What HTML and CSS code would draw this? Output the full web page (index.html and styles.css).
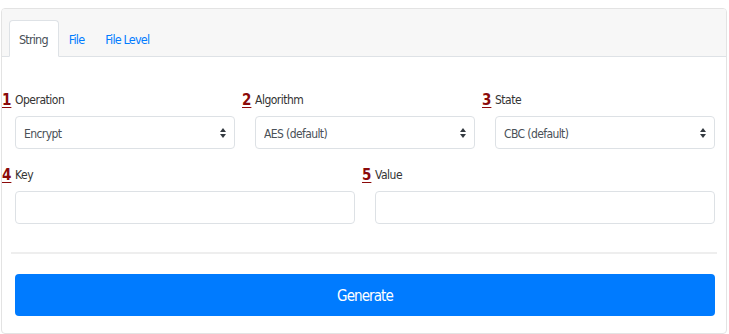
FILE: index.html
```html
<!DOCTYPE html>
<html lang="en">
<head>
    <meta charset="UTF-8">
    <meta name="viewport" content="width=device-width, initial-scale=1.0">
    <title>Encrypt / Decrypt</title>
    <link rel="stylesheet" href="styles.css">
</head>
<body>
    <div class="card">
        <div class="card-header">
            <ul class="tabs">
                <li class="tab active">String</li>
                <li class="tab">File</li>
                <li class="tab">File Level</li>
            </ul>
        </div>

        <div class="card-body">
            <div class="row three">
                <div class="group">
                    <span class="num">1</span>
                    <label for="operation">Operation</label>
                    <select id="operation">
                        <option>Encrypt</option>
                        <option>Decrypt</option>
                    </select>
                </div>
                <div class="group">
                    <span class="num">2</span>
                    <label for="algorithm">Algorithm</label>
                    <select id="algorithm">
                        <option>AES (default)</option>
                    </select>
                </div>
                <div class="group">
                    <span class="num">3</span>
                    <label for="state">State</label>
                    <select id="state">
                        <option>CBC (default)</option>
                    </select>
                </div>
            </div>

            <div class="row two">
                <div class="group">
                    <span class="num">4</span>
                    <label for="key">Key</label>
                    <input type="text" id="key">
                </div>
                <div class="group">
                    <span class="num">5</span>
                    <label for="value">Value</label>
                    <input type="text" id="value">
                </div>
            </div>

            <hr>

            <button type="button">Generate</button>
        </div>
    </div>
</body>
</html>
```

FILE: styles.css
```css
* {
    box-sizing: border-box;
}

body {
    margin: 0;
    padding: 8px 2px 0 1px;
    background-color: #fff;
    font-family: "DejaVu Sans Condensed", "Liberation Sans", sans-serif;
    color: #333;
}

.card {
    border: 1px solid #e3e3e3;
    border-radius: 4px;
    height: 326px;
    overflow: hidden;
}

.card-header {
    background-color: #f7f7f7;
    border-bottom: 1px solid #dee2e6;
    padding: 11px 7px 0;
}

.tabs {
    list-style: none;
    margin: 0 0 -1px;
    padding: 0;
    display: flex;
}

.tab {
    padding: 0 10px 0 9px;
    height: 37px;
    line-height: 38px;
    font-size: 12.5px;
    letter-spacing: -0.8px;
    color: #007bff;
    border: 1px solid transparent;
    border-radius: 4px 4px 0 0;
}

.tab.active {
    color: #495057;
    background-color: #fff;
    border-color: #dee2e6 #dee2e6 #fff;
}

.card-body {
    padding: 33px 11px 0 13px;
}

.row {
    display: grid;
    column-gap: 20px;
    margin-bottom: 16px;
}

.row.three {
    grid-template-columns: 220px 220px 220px;
}

.row.two {
    grid-template-columns: 340px 340px;
    margin-bottom: 28px;
}

.group {
    position: relative;
    display: flex;
    flex-direction: column;
}

/* step markers sit in the gutter left of each field */
.num {
    position: absolute;
    left: -13px;
    top: 0;
    line-height: 20px;
    font-size: 15px;
    font-weight: bold;
    color: #8b0a0a;
    text-decoration: underline;
    text-underline-offset: 2px;
}

label {
    line-height: 20px;
    font-size: 12px;
    letter-spacing: -0.5px;
    color: #333;
    margin-bottom: 6px;
}

select, input {
    height: 33px;
    border: 1px solid #dde1e5;
    border-radius: 4px;
    background-color: #fff;
    font-family: inherit;
    font-size: 12px;
    letter-spacing: -0.6px;
    color: #495057;
    padding: 2px 8px 0;
    margin: 0;
}

select {
    appearance: none;
    -webkit-appearance: none;
    background-image: url("data:image/svg+xml,%3Csvg xmlns='http://www.w3.org/2000/svg' width='6' height='10' viewBox='0 0 6 10'%3E%3Cpath d='M3 0L6 4H0z M3 10L0 6h6z' fill='%23343a40'/%3E%3C/svg%3E");
    background-repeat: no-repeat;
    background-position: right 8px center;
    background-size: 6px 10px;
}

hr {
    border: 0;
    border-top: 2px solid #eee;
    margin: 0 -2px 20px -4px;
}

button {
    display: block;
    width: 700px;
    height: 42px;
    background-color: #007bff;
    color: #fff;
    border: none;
    border-radius: 4px;
    font-family: inherit;
    font-size: 15px;
    letter-spacing: -0.9px;
    padding-top: 2px;
    cursor: pointer;
}

button:hover {
    background-color: #0069d9;
}
```
